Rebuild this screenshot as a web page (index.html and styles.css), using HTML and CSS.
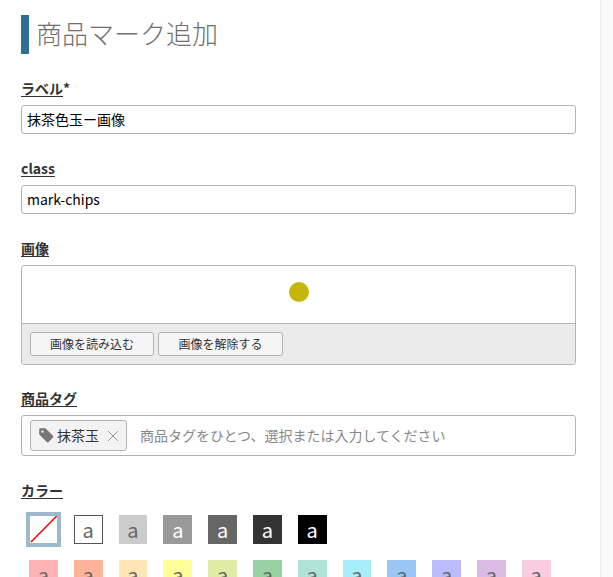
FILE: index.html
```html
<!DOCTYPE html>
<html lang="ja">
<head>
<meta charset="utf-8">
<title>商品マーク追加</title>
<link rel="stylesheet" href="styles.css">
</head>
<body>
<main class="page">
  <h1 class="title">商品マーク追加</h1>
  <section class="field field-first">
    <div class="label-row"><span class="label">ラベル</span><span class="req">*</span></div>
    <div class="input">抹茶色玉ー画像</div>
  </section>
  <section class="field">
    <div class="label-row"><span class="label">class</span></div>
    <div class="input">mark-chips</div>
  </section>
  <section class="field">
    <div class="label-row"><span class="label">画像</span></div>
    <div class="image-box">
      <div class="preview"><span class="dot"></span></div>
      <div class="toolbar">
        <button class="btn btn-load" type="button">画像を読み込む</button>
        <button class="btn btn-clear" type="button">画像を解除する</button>
      </div>
    </div>
  </section>
  <section class="field field-tag">
    <div class="label-row"><span class="label">商品タグ</span></div>
    <div class="tag-box">
      <span class="chip">
        <svg class="tag-icon" viewBox="0 0 16 16" width="16" height="16"><path fill="#777" d="M1.2 2.2a1 1 0 0 1 1-1h5.2L15 8.8a1.3 1.3 0 0 1 0 1.8l-4.4 4.4a1.3 1.3 0 0 1-1.8 0L1.2 7.4z"/><circle cx="4.4" cy="4.6" r="1.2" fill="#f3f3f3"/></svg>
        <span class="chip-text">抹茶玉</span>
        <svg class="x-icon" viewBox="0 0 12 12" width="12" height="12"><path stroke="#999" stroke-width="1" fill="none" d="M1 1l10 10M11 1L1 11"/></svg>
      </span>
      <span class="placeholder">商品タグをひとつ、選択または入力してください</span>
    </div>
  </section>
  <section class="field">
    <div class="label-row"><span class="label">カラー</span></div>
    <div class="swatches swatches-first">
      <span class="swatch none">
        <svg viewBox="0 0 27 27" preserveAspectRatio="none"><line x1="1" y1="26" x2="27" y2="0" stroke="#f00000" stroke-width="1.5"/></svg>
      </span>
      <span class="swatch outline">a</span>
      <span class="swatch g1">a</span>
      <span class="swatch g2">a</span>
      <span class="swatch g3">a</span>
      <span class="swatch g4">a</span>
      <span class="swatch g5">a</span>
    </div>
    <div class="swatches">
      <span class="swatch c1">a</span>
      <span class="swatch c2">a</span>
      <span class="swatch c3">a</span>
      <span class="swatch c4">a</span>
      <span class="swatch c5">a</span>
      <span class="swatch c6">a</span>
      <span class="swatch c7">a</span>
      <span class="swatch c8">a</span>
      <span class="swatch c9">a</span>
      <span class="swatch c10">a</span>
      <span class="swatch c11">a</span>
      <span class="swatch c12">a</span>
    </div>
  </section>
</main>
<div class="scroll-track"></div>
</body>
</html>
```
FILE: styles.css
```css
html, body {
  margin: 0;
  padding: 0;
  height: 577px;
  overflow: hidden;
  background: #fff;
}
body {
  display: flex;
  font-family: "Noto Sans CJK JP", "Noto Sans", sans-serif;
  font-size: 14px;
  color: #333;
}
.page {
  width: 555px;
  padding: 15px 24px 0 21px;
  flex: none;
}
.scroll-track {
  margin-left: auto;
  width: 13px;
  height: 577px;
  background: #fafafa;
  border-left: 1px solid #eee;
  box-sizing: border-box;
}
.title {
  margin: 0;
  height: 39px;
  border-left: 8px solid #2e6f94;
  padding-left: 7px;
  font-size: 26px;
  font-weight: 300;
  line-height: 35px;
  color: #6f6f6f;
}
.field {
  margin-top: 26px;
}
.field-first {
  margin-top: 26px;
}
.field-tag {
  margin-top: 25px;
}
.label-row {
  height: 17px;
  line-height: 17px;
  margin-bottom: 8px;
  font-weight: 700;
  font-size: 14px;
  color: #333;
}
.label {
  text-decoration: underline;
  text-underline-offset: 2px;
}
.input {
  box-sizing: border-box;
  height: 29px;
  border: 1px solid #b3b3b3;
  border-radius: 3px;
  padding: 0 5px;
  line-height: 27px;
  font-size: 14px;
  color: #000;
}
.image-box {
  box-sizing: border-box;
  height: 100px;
  border: 1px solid #b3b3b3;
  border-radius: 3px;
  overflow: hidden;
}
.preview {
  box-sizing: border-box;
  height: 58px;
  padding-bottom: 5px;
  display: flex;
  align-items: center;
  justify-content: center;
  border-bottom: 1px solid #b3b3b3;
}
.dot {
  width: 20px;
  height: 20px;
  border-radius: 50%;
  background: #c3b70c;
}
.toolbar {
  height: 40px;
  background: #ebebeb;
  display: flex;
  gap: 4px;
  padding: 8px 0 0 8px;
  box-sizing: border-box;
}
.btn {
  height: 24px;
  box-sizing: border-box;
  background: #f5f5f5;
  border: 1px solid #b3b3b3;
  border-radius: 3px;
  padding: 0 0 2px;
  font-family: inherit;
  font-size: 12px;
  color: #333;
}
.btn-load { width: 124px; }
.btn-clear { width: 125px; }
.tag-box {
  box-sizing: border-box;
  height: 41px;
  border: 1px solid #b3b3b3;
  border-radius: 3px;
  padding: 4px 8px;
  display: flex;
  align-items: center;
}
.chip {
  box-sizing: border-box;
  height: 31px;
  width: 97px;
  display: flex;
  align-items: center;
  background: #f3f3f3;
  border: 1px solid #b3b3b3;
  border-radius: 3px;
  padding: 0 7px;
  gap: 3px;
  color: #333;
}
.chip-text { margin-top: -2px; }
.tag-icon { flex: none; margin-top: -1px; }
.x-icon { flex: none; margin-left: 5px; }
.placeholder {
  margin: -2px 0 0 13px;
  color: #888;
  font-size: 14px;
}
.swatches {
  display: flex;
  gap: 16px;
  padding-left: 8px;
  margin-top: 16px;
}
.swatches-first { margin-top: 16px; }
.swatch {
  width: 28.8px;
  height: 29px;
  flex: none;
  box-sizing: border-box;
  text-align: center;
  font-size: 20px;
  line-height: 29px;
  color: #666;
}
.none {
  outline: 4px solid #9dbacc;
  outline-offset: -1px;
  border: 1px solid #fff;
}
.none svg { display: block; width: 100%; height: 100%; }
.outline { border: 1px solid #555; line-height: 27px; }
.g1 { background: #ccc; }
.g2 { background: #999; color: #fff; }
.g3 { background: #666; color: #fff; }
.g4 { background: #333; color: #fff; }
.g5 { background: #000; color: #fff; }
.c1 { background: #ffb3b3; }
.c2 { background: #ffb399; }
.c3 { background: #ffe5b3; }
.c4 { background: #ffff99; }
.c5 { background: #e0eba6; }
.c6 { background: #99d1a3; }
.c7 { background: #b0e3d6; }
.c8 { background: #a8eef8; }
.c9 { background: #99c7f5; }
.c10 { background: #bbbbff; }
.c11 { background: #dabbe3; }
.c12 { background: #f9cce0; }
```
